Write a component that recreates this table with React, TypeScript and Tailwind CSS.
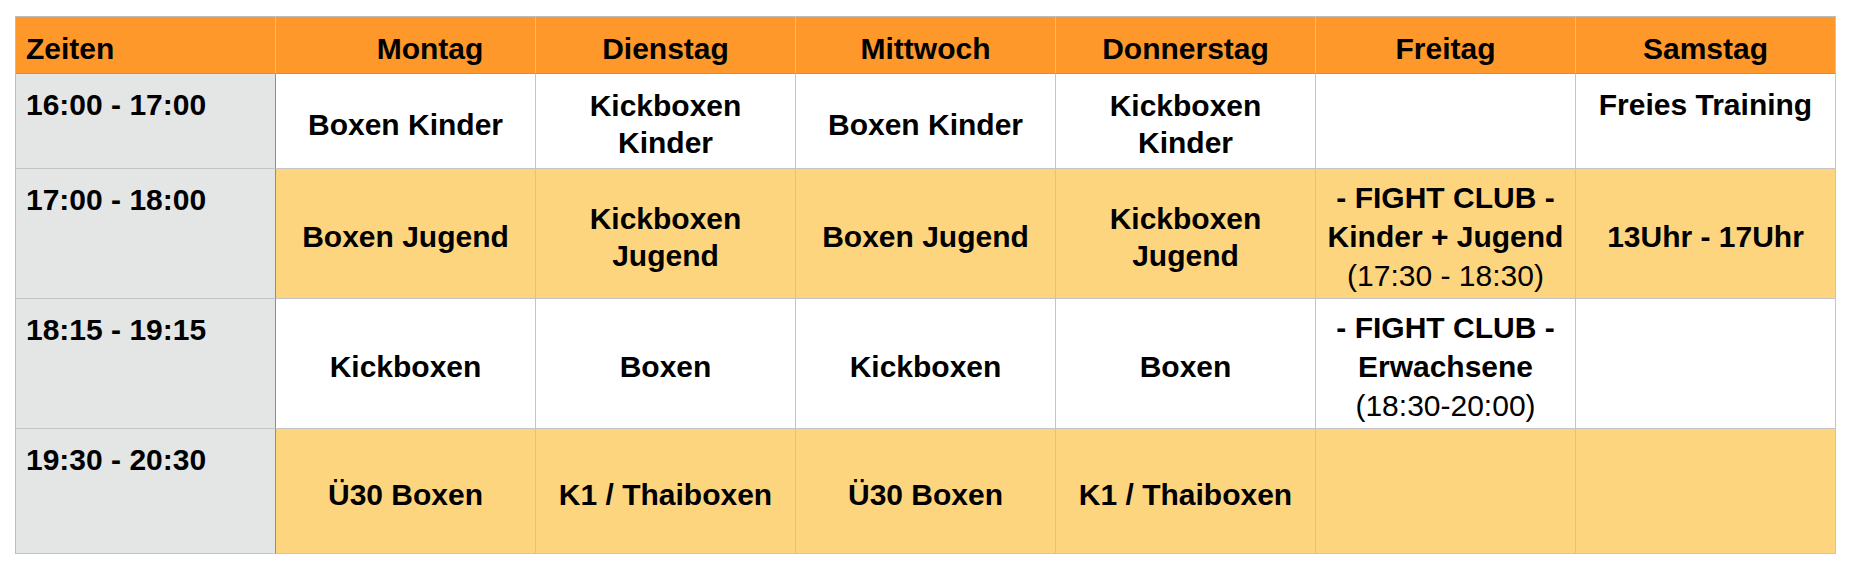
import React from "react";

type Cell = {
  lines?: string[];
  sub?: string;
  top?: boolean;
};

const days = ["Montag", "Dienstag", "Mittwoch", "Donnerstag", "Freitag", "Samstag"];

const rows: { time: string; bg: string; cells: Cell[] }[] = [
  {
    time: "16:00 - 17:00",
    bg: "bg-white",
    cells: [
      { lines: ["Boxen Kinder"] },
      { lines: ["Kickboxen", "Kinder"] },
      { lines: ["Boxen Kinder"] },
      { lines: ["Kickboxen", "Kinder"] },
      {},
      { lines: ["Freies Training"], top: true },
    ],
  },
  {
    time: "17:00 - 18:00",
    bg: "bg-[#fed57f]",
    cells: [
      { lines: ["Boxen Jugend"] },
      { lines: ["Kickboxen", "Jugend"] },
      { lines: ["Boxen Jugend"] },
      { lines: ["Kickboxen", "Jugend"] },
      { lines: ["- FIGHT CLUB -", "Kinder + Jugend"], sub: "(17:30 - 18:30)" },
      { lines: ["13Uhr - 17Uhr"] },
    ],
  },
  {
    time: "18:15 - 19:15",
    bg: "bg-white",
    cells: [
      { lines: ["Kickboxen"] },
      { lines: ["Boxen"] },
      { lines: ["Kickboxen"] },
      { lines: ["Boxen"] },
      { lines: ["- FIGHT CLUB -", "Erwachsene"], sub: "(18:30-20:00)" },
      {},
    ],
  },
  {
    time: "19:30 - 20:30",
    bg: "bg-[#fed57f]",
    cells: [
      { lines: ["Ü30 Boxen"] },
      { lines: ["K1 / Thaiboxen"] },
      { lines: ["Ü30 Boxen"] },
      { lines: ["K1 / Thaiboxen"] },
      {},
      {},
    ],
  },
];

const ScheduleCell = ({ cell, bg }: { cell: Cell; bg: string }) => {
  if (cell.top) {
    return (
      <div className={`${bg} border-r border-b border-[#c4c4c4] flex flex-col items-center pt-3 text-center`}>
        {cell.lines?.map((l) => (
          <span key={l} className="font-bold">{l}</span>
        ))}
      </div>
    );
  }
  return (
    <div
      className={`${bg} border-r border-b border-[#c4c4c4] flex flex-col items-center justify-center pt-[6px] text-center ${
        cell.sub ? "leading-[39px]" : ""
      }`}
    >
      {cell.lines?.map((l) => (
        <span key={l} className="font-bold whitespace-nowrap">{l}</span>
      ))}
      {cell.sub && <span className="font-normal whitespace-nowrap">{cell.sub}</span>}
    </div>
  );
};

export default function App() {
  return (
    <div className="bg-white w-[1854px] h-[566px] pt-4 pl-[15px] font-['Liberation_Sans',Arial,sans-serif] text-[30px] leading-[37px] text-black">
      <div className="grid grid-cols-[repeat(7,260px)] grid-rows-[57px_95px_130px_130px_125px] w-[1821px] border-l border-t border-[#bdbdbd]">
        <div className="bg-[#fe982b] border-r border-b border-r-[#c4c4c4] border-b-[#9a9a9a] flex items-center pl-[10px] pt-[6px] font-bold">
          Zeiten
        </div>
        {days.map((d, i) => (
          <div
            key={d}
            className={`bg-[#fe982b] border-r border-b border-r-[#c4c4c4] border-b-[#9a9a9a] flex items-center justify-center pt-[6px] font-bold ${
              i === 0 ? "pl-[49px]" : ""
            }`}
          >
            {d}
          </div>
        ))}

        {rows.map((row) => (
          <React.Fragment key={row.time}>
            <div className="bg-[#e4e5e5] border-b border-r border-b-[#c4c4c4] border-r-[#8f8f8f] pl-[10px] pt-3 font-bold">
              {row.time}
            </div>
            {row.cells.map((c, i) => (
              <ScheduleCell key={i} cell={c} bg={row.bg} />
            ))}
          </React.Fragment>
        ))}
      </div>
    </div>
  );
}
